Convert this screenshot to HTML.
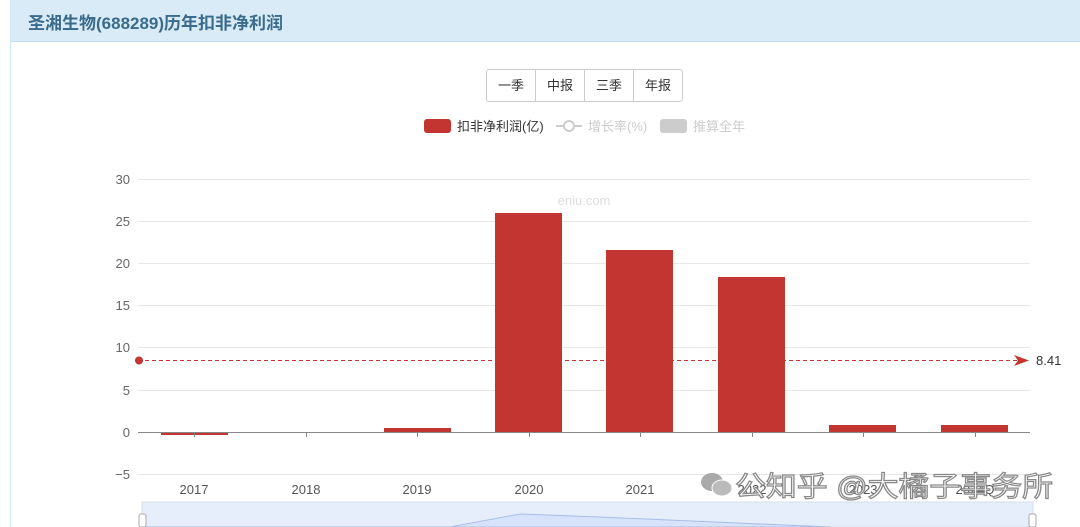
<!DOCTYPE html>
<html><head><meta charset="utf-8"><style>
body{margin:0;width:1080px;height:527px;overflow:hidden;background:#fff;font-family:"Liberation Sans","Noto Sans CJK SC",sans-serif;position:relative}
.card{position:absolute;left:10px;top:0;width:1070px;height:527px;border-left:1px solid #cfe6ee;}
.hd{position:absolute;left:0;top:0;width:1070px;height:41px;background:#d9ebf6;border-bottom:1px solid #c6dfee}
.hd span{position:absolute;left:17px;top:9px;font-size:17px;font-weight:bold;color:#3a6b8c}
.btns{position:absolute;left:486px;top:69px;height:31px;border:1px solid #ccc;border-radius:3px;display:flex}
.btns div{width:48px;text-align:center;line-height:31px;font-size:13px;color:#333;border-left:1px solid #ccc}
.btns div:first-child{border-left:none}
</style></head><body>
<div class="card"><div class="hd"><span>圣湘生物(688289)历年扣非净利润</span></div></div>
<div class="btns"><div>一季</div><div>中报</div><div>三季</div><div>年报</div></div>
<svg width="1080" height="527" style="position:absolute;left:0;top:0" font-family="Liberation Sans, Noto Sans CJK SC, sans-serif">
<rect x="424" y="119" width="27" height="14" rx="3" fill="#c23531"/>
<text x="457" y="131" font-size="13" fill="#333">扣非净利润(亿)</text>
<line x1="556" y1="126" x2="582" y2="126" stroke="#ccc" stroke-width="2"/>
<circle cx="569" cy="126" r="5" fill="#fff" stroke="#ccc" stroke-width="2"/>
<text x="588" y="131" font-size="13" fill="#ccc">增长率(%)</text>
<rect x="660" y="119" width="27" height="14" rx="3" fill="#ccc"/>
<text x="693" y="131" font-size="13" fill="#ccc">推算全年</text>
<g stroke="#e6e6e6" stroke-width="1">
<line x1="138" y1="179.5" x2="1030" y2="179.5"/><line x1="138" y1="221.5" x2="1030" y2="221.5"/>
<line x1="138" y1="263.5" x2="1030" y2="263.5"/><line x1="138" y1="305.5" x2="1030" y2="305.5"/>
<line x1="138" y1="347.5" x2="1030" y2="347.5"/><line x1="138" y1="390.5" x2="1030" y2="390.5"/>
<line x1="138" y1="474.5" x2="1030" y2="474.5"/></g>
<g font-size="13" fill="#666" text-anchor="end">
<text x="130" y="184">30</text><text x="130" y="226">25</text><text x="130" y="268">20</text>
<text x="130" y="310">15</text><text x="130" y="352">10</text><text x="130" y="395">5</text>
<text x="130" y="437">0</text><text x="130" y="479">−5</text></g>
<text x="584" y="205" font-size="13" fill="#ddd" text-anchor="middle">eniu.com</text>
<g fill="#c23531">
<rect x="161" y="432" width="67" height="3"/><rect x="384" y="428" width="67" height="4"/>
<rect x="495" y="213" width="67" height="219"/><rect x="606" y="250" width="67" height="182"/>
<rect x="718" y="277" width="67" height="155"/><rect x="829" y="425" width="67" height="7"/>
<rect x="941" y="425" width="67" height="7"/></g>
<line x1="138" y1="432.5" x2="1030" y2="432.5" stroke="#888"/>
<g stroke="#888"><line x1="194.5" y1="432" x2="194.5" y2="437"/><line x1="306.5" y1="432" x2="306.5" y2="437"/><line x1="417.5" y1="432" x2="417.5" y2="437"/><line x1="529.5" y1="432" x2="529.5" y2="437"/><line x1="640.5" y1="432" x2="640.5" y2="437"/><line x1="752.5" y1="432" x2="752.5" y2="437"/><line x1="863.5" y1="432" x2="863.5" y2="437"/><line x1="975.5" y1="432" x2="975.5" y2="437"/></g>
<line x1="138" y1="360.5" x2="1020" y2="360.5" stroke="#c23531" stroke-dasharray="4,3"/>
<circle cx="139" cy="360.5" r="4" fill="#c23531"/>
<path d="M1014 355 L1029 360.5 L1014 366 L1018 360.5Z" fill="#c23531"/>
<text x="1036" y="365" font-size="13" fill="#333">8.41</text>
<g font-size="13" fill="#555" text-anchor="middle">
<text x="194" y="494">2017</text><text x="306" y="494">2018</text><text x="417" y="494">2019</text>
<text x="529" y="494">2020</text><text x="640" y="494">2021</text><text x="752" y="494">2022</text>
<text x="863" y="494">2023</text><text x="975" y="494">2024Q</text></g>
<rect x="142" y="502" width="891" height="25" fill="#e6eefb" stroke="#d5deee"/>
<path d="M142 527 L450 527 L520 514 L600 517 L830 527Z" fill="#d7e3fa" stroke="#a8bde6"/>
<rect x="139" y="514" width="7" height="13" rx="2" fill="#fff" stroke="#aaa"/>
<rect x="1029" y="514" width="7" height="13" rx="2" fill="#fff" stroke="#aaa"/>
<g fill="#aaa"><ellipse cx="712" cy="482" rx="11" ry="9"/><ellipse cx="722" cy="488" rx="10" ry="8" fill="#bbb" stroke="#fff"/></g>
<text x="735" y="496" font-size="28" fill="#fff" stroke="#888" stroke-width="1.2" textLength="318" lengthAdjust="spacingAndGlyphs">公知乎 @大橘子事务所</text>
</svg>
</body></html>
